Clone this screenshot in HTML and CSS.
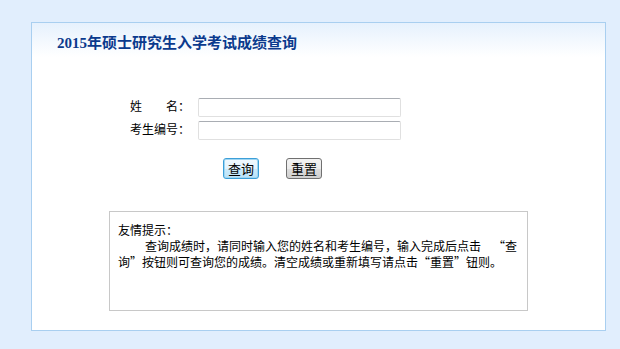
FILE: index.html
```html
<!DOCTYPE html>
<html lang="zh-CN">
<head>
    <meta charset="UTF-8">
    <title>2015年硕士研究生入学考试成绩查询</title>
    <link rel="stylesheet" href="styles.css">
</head>
<body>
    <div class="panel">
        <h1 class="title">2015年硕士研究生入学考试成绩查询</h1>

        <form class="query-form">
            <div class="row">
                <label for="xm">姓&emsp;&emsp;名：</label>
                <input type="text" id="xm" name="xm">
            </div>
            <div class="row">
                <label for="ksbh">考生编号：</label>
                <input type="text" id="ksbh" name="ksbh">
            </div>
            <div class="buttons">
                <button type="submit" class="btn btn-focus">查询</button>
                <button type="reset" class="btn">重置</button>
            </div>
        </form>

        <div class="tips">
            <p>友情提示：</p>
            <p class="indent">查询成绩时，请同时输入您的姓名和考生编号，输入完成后点击 “查询”按钮则可查询您的成绩。清空成绩或重新填写请点击“重置”钮则。</p>
        </div>
    </div>
</body>
</html>
```

FILE: styles.css
```css
body {
    margin: 0;
    padding: 22px 0 0 31px;
    background-color: #e1eefd;
    font-family: "Liberation Sans", "Noto Sans CJK SC", sans-serif;
    font-size: 12px;
    color: #000;
}
.panel {
    width: 573px;
    height: 307px;
    border: 1px solid #a9cff0;
    background: linear-gradient(to bottom, #e6f1fd 0px, #ffffff 34px, #ffffff 100%);
}
.title {
    margin: 10px 0 0 25px;
    font-family: "Liberation Serif", "Noto Sans CJK SC", serif;
    font-size: 15px;
    line-height: 20px;
    font-weight: bold;
    color: #0b3a8d;
}
.query-form {
    margin: 45px 0 0 98px;
}
.row {
    display: flex;
    align-items: center;
    margin-bottom: 4px;
}
.row label {
    width: 68px;
    line-height: 19px;
}
.row input {
    width: 197px;
    height: 13px;
    padding: 2px;
    border: 1px solid #e0e0e0;
    border-top-color: #a9adb3;
    border-radius: 2px;
    font-size: 12px;
}
.buttons {
    display: flex;
    gap: 27px;
    margin: 18px 0 0 93px;
}
.btn {
    width: 36px;
    height: 21px;
    padding: 0;
    border: 1px solid #707070;
    border-radius: 3px;
    background: linear-gradient(to bottom, #f3f3f3 0%, #ebebeb 50%, #dddddd 51%, #cfcfcf 100%);
    font-family: "Noto Sans CJK SC", sans-serif;
    font-size: 13px;
    line-height: 18px;
    color: #000;
}
.btn-focus {
    border: 1px solid #3c9fd8;
    box-shadow: inset 0 0 0 1px #9fd6f3;
    background: linear-gradient(to bottom, #f2f9fe 0%, #e3f3fd 50%, #cdebfb 51%, #b9e2f8 100%);
}
.tips {
    width: 401px;
    height: 88px;
    margin: 32px 0 0 77px;
    padding: 10px 8px 0 8px;
    border: 1px solid #c8c8c8;
    font-family: "Noto Sans CJK SC", sans-serif;
    font-feature-settings: "fwid";
}
.tips p {
    margin: 0;
    line-height: 16px;
}
.tips .indent {
    text-indent: 27px;
}
```
